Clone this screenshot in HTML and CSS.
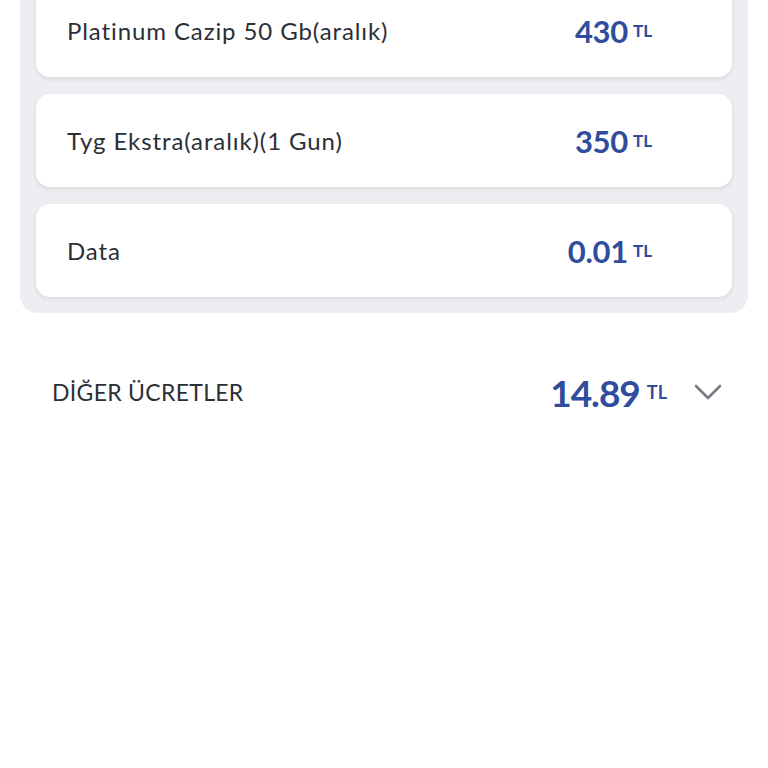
FILE: index.html
```html
<!DOCTYPE html>
<html lang="tr">
<head>
    <meta charset="UTF-8">
    <meta name="viewport" content="width=device-width, initial-scale=1.0">
    <title>Fatura Detayı</title>
    <link rel="stylesheet" href="styles.css">
</head>
<body>
    <div class="panel">
        <div class="item">
            <span class="item-name">Platinum Cazip 50 Gb(aralık)</span>
            <span class="price"><span class="amount">430</span><span class="unit">TL</span></span>
        </div>
        <div class="item">
            <span class="item-name">Tyg Ekstra(aralık)(1 Gun)</span>
            <span class="price"><span class="amount">350</span><span class="unit">TL</span></span>
        </div>
        <div class="item">
            <span class="item-name">Data</span>
            <span class="price"><span class="amount">0.01</span><span class="unit">TL</span></span>
        </div>
    </div>

    <div class="summary">
        <span class="summary-title">DİĞER ÜCRETLER</span>
        <span class="price price-lg"><span class="amount">14.89</span><span class="unit">TL</span></span>
        <svg class="chevron" width="28" height="16" viewBox="0 0 28 16">
            <path d="M2 2 L14 14 L26 2" fill="none" stroke="#777a80" stroke-width="2.6" stroke-linecap="round" stroke-linejoin="round"/>
        </svg>
    </div>
</body>
</html>
```

FILE: styles.css
```css
body {
    margin: 0;
    background: #fff;
    font-family: Lato, "Noto Sans", sans-serif;
    color: #2b2f36;
}

.panel {
    margin: -34px 20px 0;
    padding: 18px 16px 16px;
    background: #eceef1;
    border-radius: 18px;
    display: flex;
    flex-direction: column;
    gap: 17px;
}

.item {
    height: 93px;
    background: #fff;
    border-radius: 14px;
    box-shadow: 0 2px 5px rgba(0, 0, 0, 0.09);
    display: flex;
    align-items: center;
    justify-content: space-between;
    padding: 0 80px 0 31px;
}

.item-name {
    font-size: 24px;
    letter-spacing: 0.9px;
}

.price {
    display: flex;
    align-items: center;
    color: #2f4c9d;
    font-weight: 700;
}

.price .amount {
    font-size: 31px;
    letter-spacing: -0.3px;
}

.price .unit {
    font-size: 17px;
    margin-left: 5px;
}

.summary {
    display: flex;
    align-items: center;
    padding: 0 46px 0 52px;
    margin-top: 46px;
    height: 66px;
}

.summary-title {
    font-size: 23px;
    letter-spacing: 0.3px;
    flex: 1;
}

.price-lg .amount {
    font-size: 37px;
    letter-spacing: -1px;
}

.price-lg .unit {
    font-size: 18px;
    margin-left: 7px;
}

.chevron {
    margin-left: 27px;
}
```
